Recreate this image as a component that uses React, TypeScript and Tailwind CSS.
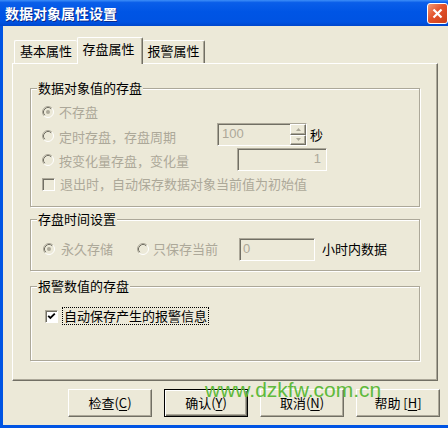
import React from 'react';

function Radio({ checked }: { checked?: boolean }) {
  return (
    <svg width="12" height="12" viewBox="0 0 12 12" className="shrink-0">
      <circle cx="6" cy="6" r="5" fill="#ece9d8" />
      <path d="M2.11 9.89 A5.5 5.5 0 0 1 9.89 2.11" fill="none" stroke="#aca899" />
      <path d="M9.89 2.11 A5.5 5.5 0 0 1 2.11 9.89" fill="none" stroke="#ffffff" />
      <path d="M2.82 9.18 A4.5 4.5 0 0 1 9.18 2.82" fill="none" stroke="#716f64" />
      {checked && <circle cx="6" cy="6" r="2" fill="#aca899" />}
    </svg>
  );
}

function CheckBox({ checked, disabled }: { checked?: boolean; disabled?: boolean }) {
  return (
    <div
      className={`w-[13px] h-[13px] shrink-0 border border-t-[#aca899] border-l-[#aca899] border-r-white border-b-white shadow-[inset_1px_1px_0_#716f64] flex items-center justify-center ${
        disabled ? 'bg-[#ece9d8]' : 'bg-white'
      }`}
    >
      {checked && (
        <svg width="9" height="9" viewBox="0 0 9 9">
          <path d="M1.2 3.8 L3.4 6 L7.8 1.6" fill="none" stroke="#000" strokeWidth="1.8" />
        </svg>
      )}
    </div>
  );
}

function SpinBtn({ up }: { up?: boolean }) {
  return (
    <div className="flex-1 border border-t-white border-l-white border-r-[#716f64] border-b-[#716f64] shadow-[inset_-1px_-1px_0_#aca899] bg-[#ece9d8] flex items-center justify-center">
      <svg width="5" height="3" viewBox="0 0 5 3">
        <path d={up ? 'M2.5 0 L5 3 L0 3 Z' : 'M0 0 L5 0 L2.5 3 Z'} fill="#aca899" />
      </svg>
    </div>
  );
}

const sunken =
  'border border-t-[#aca899] border-l-[#aca899] border-r-white border-b-white shadow-[inset_1px_1px_0_#716f64] bg-[#ece9d8]';

function Button({ label, hot, isDefault, bracket }: { label: string; hot: string; isDefault?: boolean; bracket?: boolean }) {
  return (
    <button
      className={`w-[84px] h-[28px] bg-[#ece9d8] text-[13px] text-black flex items-center justify-center border ${
        isDefault
          ? 'border-black shadow-[inset_1px_1px_0_#fff,inset_-1px_-1px_0_#716f64,inset_-2px_-2px_0_#aca899]'
          : 'border-t-white border-l-white border-r-[#716f64] border-b-[#716f64] shadow-[inset_-1px_-1px_0_#aca899]'
      }`}
    >
      {label}
      {bracket ? ' [' : '('}
      <span className="underline underline-offset-2">{hot}</span>
      {bracket ? ']' : ')'}
    </button>
  );
}

export default function App() {
  return (
    <div className="relative w-[448px] h-[428px] bg-[#0054e3] flex flex-col overflow-hidden font-['Noto_Sans_CJK_SC','Liberation_Sans',sans-serif]">
      {/* Title bar */}
      <div className="h-[26px] shrink-0 flex items-start justify-between pl-[5px] bg-[linear-gradient(to_bottom,#3d8ef8_0%,#0a5ee9_10%,#0055e5_45%,#0053e2_85%,#0047cc_100%)]">
        <span className="mt-[4px] text-[14px] leading-[18px] font-bold text-white [text-shadow:1px_1px_0_#0c2a8a]">
          数据对象属性设置
        </span>
        <div className="mt-[3px] w-[21px] h-[21px] rounded-[3px] border border-white bg-[linear-gradient(135deg,#f29a76_0%,#e3522b_45%,#cc3f17_100%)] flex items-center justify-center">
          <svg width="11" height="11" viewBox="0 0 11 11">
            <path d="M1.5 1.5 L9.5 9.5 M9.5 1.5 L1.5 9.5" stroke="#fff" strokeWidth="2.2" />
          </svg>
        </div>
      </div>

      {/* Body */}
      <div className="flex-1 ml-[3px] mb-[3px] bg-[#ece9d8] flex flex-col">
        {/* Tabs */}
        <div className="mt-[11px] ml-[11px] h-[26px] flex items-end text-[13px] text-black">
          <div className="w-[63px] h-[23px] pb-[2px] rounded-t-[2px] border-t border-l border-white flex items-center justify-center">
            基本属性
          </div>
          <div className="relative z-10 -mb-px w-[66px] h-[27px] pb-[4px] pr-[3px] rounded-t-[2px] bg-[#ece9d8] border-t border-l border-white border-r border-r-[#716f64] shadow-[inset_-1px_0_0_#aca899] flex items-center justify-center">
            存盘属性
          </div>
          <div className="w-[62px] h-[23px] pb-[2px] rounded-t-[2px] border-t border-white border-r border-r-[#716f64] shadow-[inset_-1px_0_0_#aca899] flex items-center justify-center">
            报警属性
          </div>
        </div>

        {/* Tab panel */}
        <div className="ml-[9px] w-[426px] h-[318px] border border-t-white border-l-white border-r-[#716f64] border-b-[#716f64] shadow-[inset_-1px_-1px_0_#aca899] flex flex-col pl-[17px] text-[13px]">
          <fieldset className="mt-[16px] w-[390px] border border-[#aca899] shadow-[inset_1px_1px_0_#fff,1px_1px_0_#fff]">
            <legend className="ml-[6px] px-[1px] leading-[16px] bg-[#ece9d8] text-black">数据对象值的存盘</legend>
            <div className="pt-[4px] pb-[10px] px-[11px] flex flex-col text-[#aca899]">
              <div className="h-[24px] flex items-center">
                <Radio checked />
                <span className="ml-[5px]">不存盘</span>
              </div>
              <div className="h-[24px] flex items-center">
                <Radio />
                <span className="ml-[5px] w-[158px] mt-[2px]">定时存盘，存盘周期</span>
                <div className={`${sunken} w-[90px] h-[23px] flex -mt-[3px]`}>
                  <span className="flex-1 pl-[4px] leading-[19px] font-['Liberation_Sans',sans-serif]">100</span>
                  <div className="w-[16px] flex flex-col">
                    <SpinBtn up />
                    <SpinBtn />
                  </div>
                </div>
                <span className="ml-[3px] text-black -mt-[3px]">秒</span>
              </div>
              <div className="h-[24px] flex items-center">
                <Radio />
                <span className="ml-[5px] w-[178px] mt-[2px]">按变化量存盘，变化量</span>
                <div className={`${sunken} w-[90px] h-[23px] -mt-[2px] pr-[5px] text-right leading-[19px] font-['Liberation_Sans',sans-serif]`}>
                  1
                </div>
              </div>
              <div className="h-[24px] flex items-center">
                <CheckBox disabled />
                <span className="ml-[5px]">退出时，自动保存数据对象当前值为初始值</span>
              </div>
            </div>
          </fieldset>

          <fieldset className="mt-[4px] w-[390px] border border-[#aca899] shadow-[inset_1px_1px_0_#fff,1px_1px_0_#fff]">
            <legend className="ml-[6px] px-[1px] leading-[16px] bg-[#ece9d8] text-black">存盘时间设置</legend>
            <div className="pt-[10px] pb-[9px] pl-[12px] flex items-center h-[43px] text-[#aca899]">
              <Radio checked />
              <span className="ml-[6px]">永久存储</span>
              <span className="ml-[24px] flex items-center">
                <Radio />
              </span>
              <span className="ml-[4px]">只保存当前</span>
              <div className={`${sunken} ml-[21px] w-[76px] h-[23px] pl-[3px] leading-[19px] font-['Liberation_Sans',sans-serif]`}>
                0
              </div>
              <span className="ml-[7px] text-black">小时内数据</span>
            </div>
          </fieldset>

          <fieldset className="mt-[7px] w-[390px] border border-[#aca899] shadow-[inset_1px_1px_0_#fff,1px_1px_0_#fff]">
            <legend className="ml-[6px] px-[1px] leading-[16px] bg-[#ece9d8] text-black">报警数值的存盘</legend>
            <div className="pt-[10px] pb-[32px] pl-[14px]">
              <div className="h-[24px] flex items-center">
                <CheckBox checked />
                <span className="ml-[4px] px-[1px] border border-dotted border-black leading-[16px] text-black">
                  自动保存产生的报警信息
                </span>
              </div>
            </div>
          </fieldset>
        </div>

        {/* Buttons */}
        <div className="mt-[8px] ml-[65px] flex gap-[12px]">
          <Button label="检查" hot="C" />
          <Button label="确认" hot="Y" isDefault />
          <Button label="取消" hot="N" />
          <Button label="帮助" hot="H" bracket />
        </div>
      </div>

      {/* Watermark */}
      <div className="absolute left-[205px] top-[379px] text-[21px] leading-none text-[#5fba3c] font-['Liberation_Sans',sans-serif] pointer-events-none">
        www.dzkfw.com.cn
      </div>
    </div>
  );
}
